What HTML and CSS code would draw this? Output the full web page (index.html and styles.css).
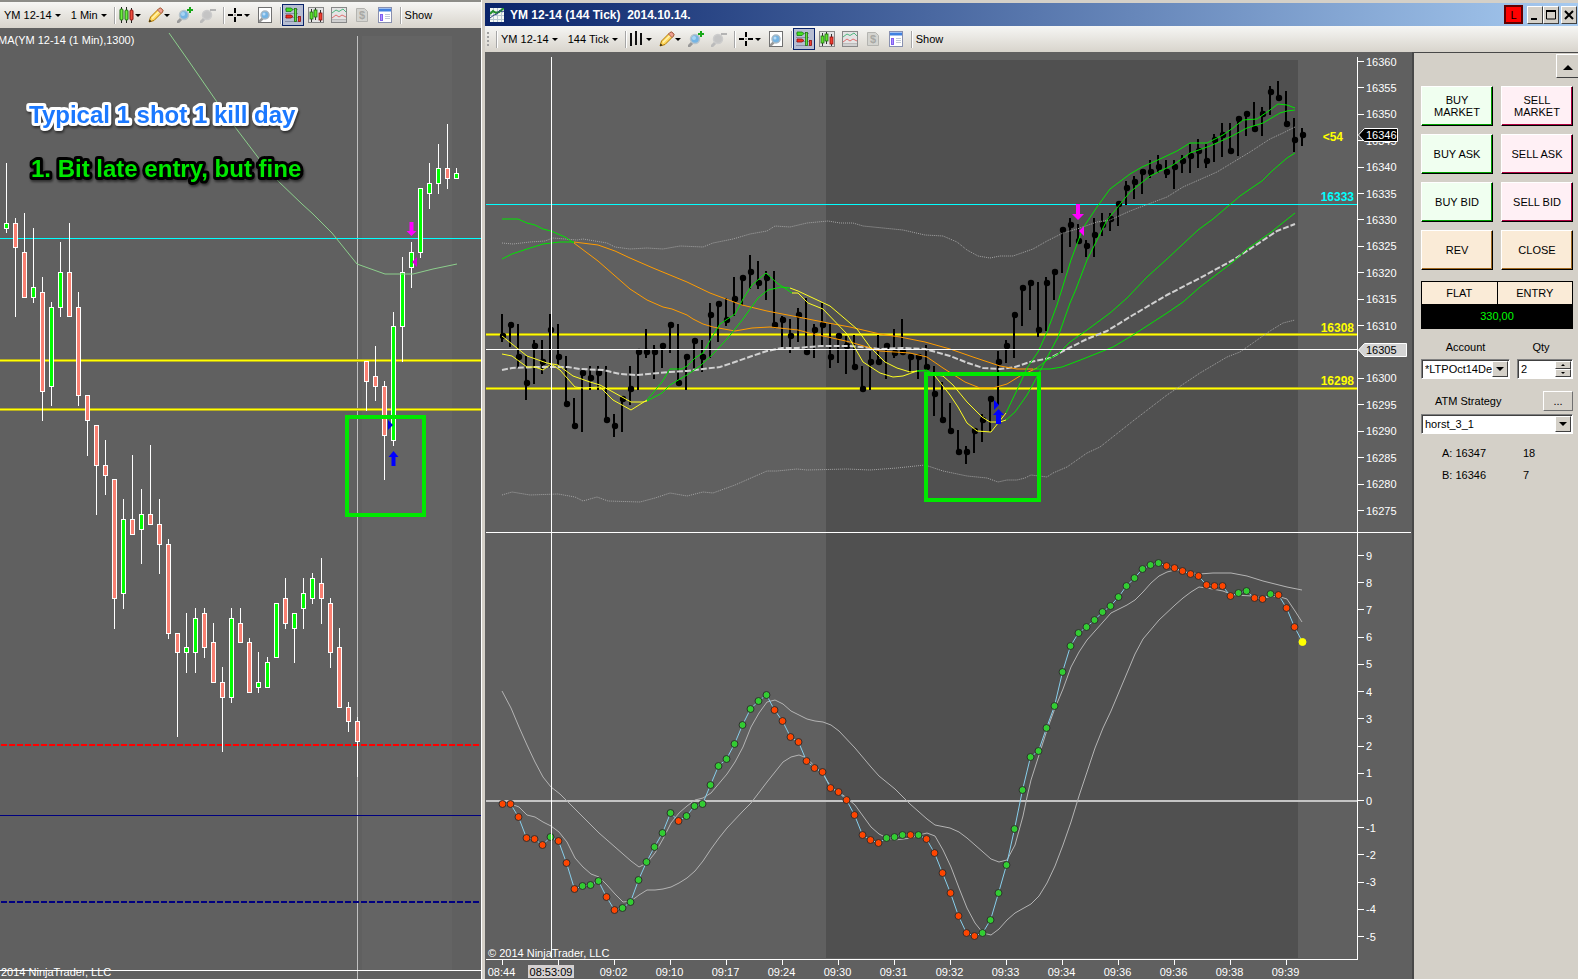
FILE: index.html
```html
<!DOCTYPE html>
<html lang="en">
<head>
  <meta charset="UTF-8" />
  <meta name="viewport" content="width=device-width, initial-scale=1.0"/>
  <title>YM 12-14 (144 Tick) 2014.10.14.</title>
  <link rel="stylesheet" href="styles.css">
</head>
<body>

  <!-- toolbar icons -->
  <svg class="sprite" aria-hidden="true">
    <symbol id="i-candles" viewBox="0 0 16 16">
      <path d="M2.5 0v16M7.5 0v16M12.5 1v15" stroke="#222"/>
      <rect x="1" y="2" width="3" height="11" rx="1" fill="#6cf03c" stroke="#1c6a10"/>
      <rect x="6" y="3" width="3" height="10" rx="1" fill="#6cf03c" stroke="#1c6a10"/>
      <rect x="11" y="3" width="3" height="10" rx="1" fill="#f05040" stroke="#8a1010"/>
    </symbol>
    <symbol id="i-bars" viewBox="0 0 16 16">
      <path d="M1 2v13M6 0v14M11 2v12" stroke="#111" stroke-width="2"/>
    </symbol>
    <symbol id="i-pencil" viewBox="0 0 16 16">
      <path d="M1 15l1.5-5L11 1.5q1.5-1 3 .5t.5 3L6 13.5z" fill="#ffd860" stroke="#b07800"/>
      <path d="M4 11.5L12.5 3" stroke="#fff3b0" stroke-width="1.5"/>
      <path d="M11 1.5q1.5-1 3 .5t.5 3l-1.500 1.5-3.500-3.5z" fill="#f0a090" stroke="#a86050"/>
      <path d="M1 15l.7-2.5 1.8 1.8z" fill="#222"/>
    </symbol>
    <symbol id="i-zoom-in" viewBox="0 0 16 16">
      <path d="M1 15l4-4" stroke="#999" stroke-width="3" stroke-linecap="round"/>
      <circle cx="7" cy="8" r="4.5" fill="#74b4e4" stroke="#b8c4cc" stroke-width="1.5"/>
      <circle cx="6" cy="7" r="2" fill="#a8d4f4"/>
      <path d="M13 0v6M10 3h6" stroke="#18a818" stroke-width="2"/>
    </symbol>
    <symbol id="i-zoom-out" viewBox="0 0 16 16">
      <path d="M1 15l4-4" stroke="#bbb" stroke-width="3" stroke-linecap="round"/>
      <circle cx="7" cy="8" r="4.5" fill="#c4c4c4" stroke="#ccc" stroke-width="1.5"/>
      <path d="M10 3h6" stroke="#b4b4b4" stroke-width="2"/>
    </symbol>
    <symbol id="i-cross" viewBox="0 0 16 16">
      <path d="M7 1v5M7 10v5M0 8h5M9 8h5" stroke="#000" stroke-width="2"/>
      <path d="M6.5 8h1" stroke="#000"/>
    </symbol>
    <symbol id="i-page" viewBox="0 0 16 16">
      <rect x="1.5" y=".5" width="13" height="15" fill="#fff" stroke="#707070"/>
      <path d="M3 14l3-3" stroke="#999" stroke-width="2.5" stroke-linecap="round"/>
      <circle cx="8" cy="8" r="4" fill="#74b4e4" stroke="#a8b8c4" stroke-width="1.5"/>
      <circle cx="7" cy="7" r="1.5" fill="#b8dcf8"/>
    </symbol>
    <symbol id="i-trader" viewBox="0 0 16 16">
      <path d="M0 2.5h13M0 6.5h13M0 10.5h13M0 14.5h13" stroke="#8890a8"/>
      <path d="M1 1h5l2 1.5L6 4.500H1z" fill="#40e020" stroke="#188010" stroke-width=".8"/>
      <path d="M1 8h5l2 1.5L6 11H1z" fill="#f03020" stroke="#901010" stroke-width=".8"/>
      <rect x="9.5" y="1.5" width="2" height="13" fill="#60e040" stroke="#207010" stroke-width=".8"/>
      <rect x="13.5" y="9.5" width="2" height="5" fill="#f04030" stroke="#901010" stroke-width=".8"/>
    </symbol>
    <symbol id="i-chart-candles" viewBox="0 0 16 16">
      <rect x=".5" y=".5" width="15" height="15" fill="#e4e4e4" stroke="#888"/>
      <path d="M3.5 2v13M7.5 1v12M12.5 3v12" stroke="#333"/>
      <rect x="2" y="5" width="3" height="7" fill="#60e030" stroke="#207010" stroke-width=".8"/>
      <rect x="6" y="3" width="3" height="7" fill="#60e030" stroke="#207010" stroke-width=".8"/>
      <rect x="11" y="6" width="3" height="7" fill="#f04030" stroke="#901010" stroke-width=".8"/>
    </symbol>
    <symbol id="i-lines" viewBox="0 0 16 16">
      <rect x=".5" y=".5" width="15" height="15" fill="#e4e4e4" stroke="#888"/>
      <path d="M1 12.5h14M1 14h14" stroke="#bbb"/>
      <path d="M1 6l4-3 3 1.5L12 2l3 3" fill="none" stroke="#50b880"/>
      <path d="M1 11l4-3 3 2 3-2 4 2" fill="none" stroke="#e07070"/>
    </symbol>
    <symbol id="i-dollar" viewBox="0 0 16 16">
      <path d="M2.5 1.5h8l3 3v10h-11z" fill="#d4d4d0" stroke="#b4b4b0"/>
      <text x="5" y="12" class="icon-dollar">$</text>
    </symbol>
    <symbol id="i-panel" viewBox="0 0 16 16">
      <rect x="1.5" y=".5" width="13" height="15" fill="#fff" stroke="#8890b0"/>
      <path d="M2 3h12" stroke="#4080e0" stroke-width="3"/>
      <rect x="3.5" y="7.5" width="2" height="6" fill="#b090ff" stroke="#8060f0"/>
      <path d="M8 7.5h5M8 9.5h5M8 11.5h5" stroke="#c0c8d8"/>
    </symbol>
    <symbol id="i-app" viewBox="0 0 14 14">
      <rect width="14" height="14" fill="#f4f8f4"/>
      <path d="M0 3.5h14M0 7.5h14M0 11.5h14M3.5 0v14M7.5 0v14M11.5 0v14" stroke="#b8c8d0"/>
      <path d="M0 6l3-3 3 2 3-1 5-4" fill="none" stroke="#20902c" stroke-width="2"/>
      <path d="M0 10l4-3 3-1 3-4 2 2 2-1" fill="none" stroke="#304880"/>
    </symbol>
  </svg>

  <section class="pane pane-minute">
    <div class="toolbar">
      <button class="tool symbol">YM 12-14<i class="caret"></i></button>
      <button class="tool">1 Min<i class="caret"></i></button>
      <span class="sep"></span>
      <button class="tool" aria-label="Chart style"><svg class="icon"><use href="#i-candles"/></svg><i class="caret near"></i></button>
      <button class="tool" aria-label="Draw"><svg class="icon"><use href="#i-pencil"/></svg><i class="caret near"></i></button>
      <button class="tool" aria-label="Zoom in"><svg class="icon"><use href="#i-zoom-in"/></svg></button>
      <button class="tool" aria-label="Zoom out"><svg class="icon"><use href="#i-zoom-out"/></svg></button>
      <span class="sep"></span>
      <button class="tool" aria-label="Cursor"><svg class="icon"><use href="#i-cross"/></svg><i class="caret near"></i></button>
      <button class="tool" aria-label="Data box"><svg class="icon"><use href="#i-page"/></svg></button>
      <span class="sep"></span>
      <button class="tool active" aria-label="Chart trader"><svg class="icon"><use href="#i-trader"/></svg></button>
      <button class="tool" aria-label="Data series"><svg class="icon"><use href="#i-chart-candles"/></svg></button>
      <button class="tool" aria-label="Indicators"><svg class="icon"><use href="#i-lines"/></svg></button>
      <button class="tool" aria-label="Strategies"><svg class="icon"><use href="#i-dollar"/></svg></button>
      <button class="tool" aria-label="Properties"><svg class="icon"><use href="#i-panel"/></svg></button>
      <span class="sep"></span>
      <button class="tool">Show</button>
    </div>
    <div class="chart">
      <svg id="minuteChart">
        <g transform="translate(0,-28)">
          <rect x="362" y="36" width="90" height="934" fill="#646464"/>
          <g class="crisp">
            <path d="M357.5 36v943" stroke="#c0c0c0"/>
            <path d="M0 238.5h481" stroke="#00ffff"/>
            <path d="M0 360.5h481M0 409.5h481" stroke="#b8b020" stroke-width="3"/>
            <path d="M0 360.5h481M0 409.5h481" stroke="#ffff00"/>
            <path d="M1 744.5h479" stroke="#ff0000" stroke-width="2" stroke-dasharray="6 2"/>
            <path d="M0 815.5h481" stroke="#000080"/>
            <path d="M1 901.5h479" stroke="#000080" stroke-width="2" stroke-dasharray="6 2"/>
            <path d="M0 970.5h481" stroke="#fff"/>
          </g>
          <g id="candles" class="crisp"></g>
          <polyline class="thin" stroke="#8ccf8c" points="169,33 188,60 217,102 235,127 260,160 278,181 302,204 313,214 332,233 357,264 385,274 413,274 433,269 457,264"/>
          <path d="M409.5 222h4v9h3l-5 5-5-5h3z" fill="#ff00ff"/>
          <path d="M417 257v10l-5-5z" fill="#d800d8"/>
          <path d="M391.5 466h4v-9h3l-5-6-5 6h3z" fill="#0000ff"/>
          <path d="M388 420v10l5-5z" fill="#0000e8"/>
          <rect class="mark" x="347" y="417" width="77" height="98"/>
          <text class="label" x="-2" y="44">MA(YM 12-14 (1 Min),1300)</text>
          <text class="label" x="1" y="976">2014 NinjaTrader, LLC</text>
          <text class="note note-title" x="29" y="123">Typical 1 shot 1 kill day</text>
          <text class="note note-entry" x="31" y="177">1. Bit late entry, but fine</text>
        </g>
      </svg>
    </div>
  </section>

  <section class="pane pane-tick">
    <header class="titlebar">
      <svg class="app-icon"><use href="#i-app"/></svg>
      <h1>YM 12-14 (144 Tick)&nbsp; 2014.10.14.</h1>
      <button class="link-btn">L</button>
      <button class="win-btn" aria-label="Minimize"><svg><path d="M3 12h6" stroke="#000" stroke-width="2"/></svg></button>
      <button class="win-btn" aria-label="Maximize"><svg><path d="M2.5 4v8h9V4" fill="none" stroke="#000"/><path d="M2 4h10" stroke="#000" stroke-width="2"/></svg></button>
      <button class="win-btn close" aria-label="Close"><svg><path d="M3 4l8 8M11 4l-8 8" stroke="#000" stroke-width="2"/></svg></button>
    </header>
    <div class="toolbar">
      <span class="grip"></span>
      <span class="sep"></span>
      <button class="tool symbol">YM 12-14<i class="caret"></i></button>
      <button class="tool">144 Tick<i class="caret"></i></button>
      <span class="sep"></span>
      <button class="tool" aria-label="Chart style"><svg class="icon"><use href="#i-bars"/></svg><i class="caret near"></i></button>
      <button class="tool" aria-label="Draw"><svg class="icon"><use href="#i-pencil"/></svg><i class="caret near"></i></button>
      <button class="tool" aria-label="Zoom in"><svg class="icon"><use href="#i-zoom-in"/></svg></button>
      <button class="tool" aria-label="Zoom out"><svg class="icon"><use href="#i-zoom-out"/></svg></button>
      <span class="sep"></span>
      <button class="tool" aria-label="Cursor"><svg class="icon"><use href="#i-cross"/></svg><i class="caret near"></i></button>
      <button class="tool" aria-label="Data box"><svg class="icon"><use href="#i-page"/></svg></button>
      <span class="sep"></span>
      <button class="tool active" aria-label="Chart trader"><svg class="icon"><use href="#i-trader"/></svg></button>
      <button class="tool" aria-label="Data series"><svg class="icon"><use href="#i-chart-candles"/></svg></button>
      <button class="tool" aria-label="Indicators"><svg class="icon"><use href="#i-lines"/></svg></button>
      <button class="tool" aria-label="Strategies"><svg class="icon"><use href="#i-dollar"/></svg></button>
      <button class="tool" aria-label="Properties"><svg class="icon"><use href="#i-panel"/></svg></button>
      <span class="sep"></span>
      <button class="tool">Show</button>
    </div>

    <div class="workspace">
      <div class="chart">
        <svg id="tickChart">
          <g transform="translate(-485,-52)">
            <rect x="826" y="60" width="472" height="898" fill="#505050"/>
            <g class="crisp">
              <path d="M486 204.5h871" stroke="#00ffff"/>
              <path d="M486 334.5h871M486 388.5h871" stroke="#b8b020" stroke-width="3"/>
              <path d="M486 334.5h871M486 388.5h871" stroke="#ffff00"/>
              <path d="M486 801h871" stroke="#c4c4c4" stroke-width="2"/>
            </g>
            <g id="bars"></g>
            <g id="lines"></g>
            <g id="oscillator"></g>
            <g class="crisp">
              <path d="M486 349.5h871M551.5 57v901" stroke="#fff"/>
              <path d="M486 532.5h925M1357.5 57v902M486 959.5h872" stroke="#fff"/>
            </g>
            <g id="axes"></g>
            <path d="M1076 204h4v10h4l-6 6-6-6h4z" fill="#ff00ff"/>
            <path d="M1084 226v10l-5-5z" fill="#ff00ff"/>
            <path d="M996 424h5v-9h3l-5.500-6-5.500 6h3z" fill="#0000ff"/>
            <path d="M994 400v10l5-5z" fill="#0000ff"/>
            <rect class="mark" x="926" y="374" width="113" height="126"/>
            <text class="level cyan" x="1354" y="201">16333</text>
            <text class="level yellow" x="1354" y="332">16308</text>
            <text class="level yellow" x="1354" y="385">16298</text>
            <text class="level yellow" x="1343" y="141">&lt;54</text>
            <path d="M1358.5 135l6-6.500h33v13h-33z" fill="#000" stroke="#fff"/>
            <text class="label" x="1366" y="139">16346</text>
            <path d="M1358.5 350l6-6.500h42v13h-42z" fill="#d4d4d4" stroke="#fff"/>
            <text class="label dark" x="1366" y="354">16305</text>
            <rect x="528" y="965" width="46" height="13" fill="#d4d0d0"/>
            <text class="label dark time" x="551" y="976">08:53:09</text>
            <text class="label" x="488" y="957">© 2014 NinjaTrader, LLC</text>
          </g>
        </svg>
      </div>

      <aside class="trader">
        <button class="collapse" aria-label="Collapse"><i class="arrow-up"></i></button>
        <div class="orders">
          <button class="order buy">BUY MARKET</button>
          <button class="order sell">SELL MARKET</button>
          <button class="order buy">BUY ASK</button>
          <button class="order sell">SELL ASK</button>
          <button class="order buy">BUY BID</button>
          <button class="order sell">SELL BID</button>
          <button class="order misc">REV</button>
          <button class="order misc">CLOSE</button>
        </div>
        <div class="position">
          <span>FLAT</span>
          <span>ENTRY</span>
          <strong>330,00</strong>
        </div>
        <div class="fields">
          <div class="field account">
            <label for="account">Account</label>
            <div class="drop">
              <select id="account"><option>*LTPOct14De</option></select>
              <span class="drop-btn"><i class="caret"></i></span>
            </div>
          </div>
          <div class="field qty">
            <label for="qty">Qty</label>
            <div class="drop">
              <input id="qty" type="text" value="2">
              <span class="spin"><button aria-label="Up"><i class="arrow-up tiny"></i></button><button aria-label="Down"><i class="caret tiny"></i></button></span>
            </div>
          </div>
        </div>
        <div class="atm-head">
          <label for="atm">ATM Strategy</label>
          <button class="more">...</button>
        </div>
        <div class="drop">
          <select id="atm"><option>horst_3_1</option></select>
          <span class="drop-btn"><i class="caret"></i></span>
        </div>
        <dl class="quotes">
          <dt>A: 16347</dt><dd>18</dd>
          <dt>B: 16346</dt><dd>7</dd>
        </dl>
      </aside>
    </div>
  </section>

  <script src="script.js"></script>
</body>
</html>
```
FILE: styles.css
```css
* {
  box-sizing: border-box;
}
body {
  margin: 0;
  height: 100vh;
  display: flex;
  background: #d4d0c8;
  font-family: "Liberation Sans", Arial, sans-serif;
  font-size: 11px;
  color: #000;
  overflow: hidden;
}
button, input, select {
  font: inherit;
  color: inherit;
  padding: 0;
  margin: 0;
}
.sprite {
  position: absolute;
  width: 0;
  height: 0;
}
.pane {
  display: flex;
  flex-direction: column;
  min-width: 0;
}
.pane-minute {
  flex: 0 0 481px;
  border-top: 2px solid #8c8c88;
}
.pane-tick {
  flex: 1;
  padding-top: 3px;
  border-left: 1px solid #fff;
  padding-left: 3px;
}

/* toolbar */
.toolbar {
  display: flex;
  flex: none;
  align-items: center;
  gap: 7px;
  height: 26px;
  padding-left: 4px;
  background: linear-gradient(#f6f6f4, #d8d4cc);
}
.pane-tick .toolbar {
  padding-left: 2px;
}
.tool {
  display: flex;
  align-items: center;
  gap: 3px;
  border: 0;
  background: none;
  line-height: 13px;
  white-space: nowrap;
}
.tool.symbol {
  margin-right: 3px;
}
.tool.active {
  margin: 0 -3px;
  padding: 2px;
  border: 1px solid #0a246a;
  background: #b6bdd2;
}
.icon {
  width: 16px;
  height: 16px;
  overflow: visible;
}
.icon-dollar {
  font: bold 11px "Liberation Sans", sans-serif;
  fill: #a8a8a4;
}
.sep {
  width: 1px;
  height: 17px;
  margin: 0 -3px 0 0;
  background: #a6a6a6;
  box-shadow: 1px 0 #fff;
}
.grip {
  width: 2px;
  height: 15px;
  background: repeating-linear-gradient(#a0a0a0 0 2px, transparent 2px 4px);
}
.caret {
  border: 3px solid transparent;
  border-top-color: #000;
  border-bottom: 0;
}
.caret.near {
  margin-left: -3px;
}

/* title bar */
.titlebar {
  display: flex;
  flex: none;
  align-items: center;
  height: 23px;
  padding: 0 1px 0 5px;
  background: linear-gradient(to right, #0a246a, #a6caf0);
}
.titlebar h1 {
  flex: 1;
  margin: 0 0 0 6px;
  font-size: 12px;
  color: #fff;
}
.app-icon {
  width: 14px;
  height: 14px;
}
.link-btn {
  width: 19px;
  height: 19px;
  margin-right: 4px;
  background: #f00;
  border: 2px solid #600000;
}
.win-btn {
  width: 16px;
  height: 18px;
  background: #d4d0c8;
  border: 1px solid;
  border-color: #fff #404040 #404040 #fff;
}
.win-btn.close {
  margin-left: 2px;
}
.win-btn svg {
  display: block;
  width: 14px;
  height: 16px;
}

/* charts */
.workspace {
  display: flex;
  flex: 1;
  min-height: 0;
}
.chart {
  flex: 1;
  min-width: 0;
  min-height: 0;
  background: #606060;
}
.chart svg {
  display: block;
  width: 100%;
  height: 100%;
}
.crisp {
  shape-rendering: crispEdges;
}
.thin {
  fill: none;
}
.mark {
  fill: none;
  stroke: #00e800;
  stroke-width: 4;
}
.label {
  font-size: 11px;
  fill: #fff;
}
.label.dark {
  fill: #000;
}
.label.time {
  text-anchor: middle;
}
.level {
  font-size: 12px;
  font-weight: bold;
  text-anchor: end;
}
.level.cyan {
  fill: #00ffff;
}
.level.yellow {
  fill: #ffff00;
}
.note {
  font-size: 24px;
  font-weight: bold;
  paint-order: stroke;
  stroke-width: 6px;
  stroke-linejoin: round;
  filter: drop-shadow(1px 2px 1px rgba(0,0,0,0.5));
}
.note-title {
  fill: #1a78ff;
  stroke: #fff;
}
.note-entry {
  fill: #00e800;
  stroke: #000;
}

/* chart trader */
.trader {
  flex: 0 0 166px;
  display: flex;
  flex-direction: column;
  min-width: 0;
  padding: 1px 5px 0 7px;
  border-left: 2px solid #484848;
  border-top: 1px solid #484848;
}
.collapse {
  align-self: flex-end;
  width: 24px;
  height: 24px;
  margin-right: -7px;
  background: #d4d0c8;
  border: 1px solid;
  border-color: #fff #404040 #404040 #fff;
}
.arrow-up {
  display: inline-block;
  vertical-align: middle;
  border: 5px solid transparent;
  border-bottom-color: #000;
  border-top: 0;
}
.orders {
  display: grid;
  grid-template-columns: 1fr 1fr;
  gap: 8px;
  margin-top: 8px;
}
.order {
  height: 40px;
  padding: 0 10px;
  line-height: 12px;
  border: 1px solid;
  border-color: #fff #000 #000 #fff;
  white-space: normal;
}
.order.buy {
  background: #f0fff0;
  box-shadow: inset -1px -1px #00a000;
}
.order.sell {
  padding: 0 8px;
  background: #fff0f5;
  box-shadow: inset -1px -1px #b00040;
}
.order.misc {
  background: #faebd7;
  box-shadow: inset -1px -1px #a06820;
}
.position {
  display: grid;
  grid-template-columns: 1fr 1fr;
  gap: 1px;
  margin-top: 11px;
  padding: 1px;
  background: #000;
  text-align: center;
}
.position span {
  line-height: 22px;
  background: #faebd7;
}
.position strong {
  grid-column: 1 / 3;
  line-height: 23px;
  font-weight: normal;
  color: #00ff00;
}
.fields {
  display: flex;
  gap: 7px;
  margin-top: 12px;
}
.field {
  display: flex;
  flex-direction: column;
  gap: 6px;
  min-width: 0;
  text-align: center;
}
.field label {
  line-height: 12px;
}
.account {
  flex: 1;
}
.qty {
  flex: 0 0 56px;
}
.qty label {
  padding-right: 8px;
}
.drop {
  display: flex;
  height: 20px;
  background: #fff;
  border: 1px solid;
  border-color: #808080 #fff #fff #808080;
  box-shadow: inset 1px 1px #404040;
  padding: 1px;
}
.drop select, .drop input {
  flex: 1;
  min-width: 0;
  padding-left: 2px;
  border: 0;
  background: none;
  appearance: none;
  font-size: 11px;
  outline: 0;
}
.drop-btn {
  display: flex;
  flex: none;
  width: 16px;
  align-items: center;
  justify-content: center;
  background: #d4d0c8;
  border: 1px solid;
  border-color: #fff #404040 #404040 #fff;
}
.drop-btn .caret {
  border-width: 4px 4px 0;
}
.spin {
  display: flex;
  flex-direction: column;
  width: 16px;
}
.spin button {
  display: flex;
  flex: 1;
  align-items: center;
  justify-content: center;
  background: #d4d0c8;
  border: 1px solid;
  border-color: #fff #404040 #404040 #fff;
}
.caret.tiny {
  border-width: 2px 2px 0;
}
.arrow-up.tiny {
  border-width: 0 2px 2px;
}
.atm-head {
  display: flex;
  align-items: center;
  justify-content: space-between;
  margin: 12px 0 3px;
  padding-left: 14px;
}
.more {
  width: 30px;
  height: 20px;
  background: #d4d0c8;
  border: 1px solid;
  border-color: #fff #707070 #707070 #fff;
}
.quotes {
  display: grid;
  grid-template-columns: 81px 1fr;
  row-gap: 10px;
  margin: 13px 0 0 21px;
  line-height: 12px;
}
.quotes dd {
  margin: 0;
}
```
FILE: script.js
```js
const NS = 'http://www.w3.org/2000/svg';

function add(parent, tag, attrs, text) {
  const el = document.createElementNS(NS, tag);
  for (const key in attrs) el.setAttribute(key, attrs[key]);
  if (text) el.textContent = text;
  parent.appendChild(el);
  return el;
}

// 1 minute candles: high, body top, body bottom, low, up/down
const candles = [
  [163,223,229,233,'u'],[218,223,248,317,'d'],[213,252,298,298,'d'],[228,287,298,303,'u'],
  [277,292,392,421,'d'],[302,307,387,406,'u'],[242,272,308,317,'u'],[223,272,317,317,'d'],
  [292,307,396,406,'d'],[395,395,421,456,'d'],[425,425,466,515,'d'],[440,465,476,495,'d'],
  [479,479,599,629,'d'],[499,519,594,609,'u'],[455,519,535,535,'d'],[489,514,530,564,'u'],
  [445,514,525,525,'d'],[499,524,545,574,'d'],[539,544,634,639,'d'],[633,633,653,737,'d'],
  [613,647,653,673,'u'],[608,618,653,673,'u'],[608,613,648,658,'d'],[623,642,683,683,'d'],
  [667,682,698,752,'d'],[608,618,698,703,'u'],[608,623,643,643,'d'],[638,642,693,693,'d'],
  [652,682,688,693,'u'],[657,662,688,688,'u'],[603,603,658,658,'u'],[578,598,624,629,'d'],
  [613,613,629,663,'u'],[578,593,609,629,'u'],[573,578,599,604,'u'],[558,583,599,624,'d'],
  [598,603,653,668,'d'],[628,647,708,708,'d'],[702,707,722,732,'d'],[717,721,742,777,'d'],
  [361,361,382,411,'d'],[346,376,387,401,'d'],[381,386,436,480,'d'],[312,326,441,446,'u'],
  [257,272,327,362,'u'],[242,252,268,288,'u'],[188,188,253,258,'u'],[163,183,194,209,'u'],
  [144,168,184,194,'u'],[124,168,179,189,'d'],[168,173,179,179,'u']
];

const candleLayer = document.getElementById('candles');
candles.forEach(([high, top, bottom, low, dir], i) => {
  const x = 6.5 + i * 9;
  add(candleLayer, 'path', { d: `M${x} ${high}V${low}`, stroke: '#fff' });
  add(candleLayer, 'rect', {
    x: x - 2, y: top + 0.5, width: 4, height: bottom - top - 1,
    fill: dir === 'u' ? '#00ff00' : '#fa8072', stroke: '#fff'
  });
});

// 144 tick bars: high, low, close
const bars = [
  [314,342,336],[322,347,325],[324,368,357],[356,400,383],[340,384,346],[340,374,362],
  [314,368,330],[324,365,357],[356,404,404],[398,427,426],[372,432,373],[366,390,378],
  [366,390,373],[366,420,420],[414,437,426],[397,432,399],[366,405,389],[350,390,352],
  [329,358,352],[345,379,352],[344,368,346],[323,353,325],[324,383,383],[355,390,357],
  [339,368,341],[340,372,357],[303,358,315],[302,342,304],[298,326,320],[277,316,299],
  [276,305,278],[255,289,272],[261,289,283],[271,300,278],[271,326,325],[316,348,320],
  [319,353,336],[308,342,315],[298,353,352],[324,358,330],[303,347,325],[324,368,357],
  [333,363,336],[336,374,346],[335,368,367],[366,390,389],[351,390,362],[335,363,362],
  [344,379,346],[329,358,353],[319,353,352],[354,374,357],[354,379,357],[345,368,367],
  [366,416,394],[382,420,420],[403,431,431],[430,452,452],[446,464,452],[429,453,431],
  [414,442,420],[397,432,399],[351,405,362],[340,363,346],[313,358,315],[286,326,288],
  [281,310,283],[282,337,330],[277,331,283],[270,300,272],[228,273,230],[218,247,225],
  [224,243,241],[240,257,246],[218,257,235],[213,236,225],[213,231,219],[202,226,204],
  [181,205,188],[176,199,182],[170,194,172],[160,178,172],[155,173,167],[160,178,172],
  [160,189,167],[155,173,161],[144,173,156],[139,168,151],[144,168,161],[134,162,140],
  [123,157,135],[123,152,151],[117,156,119],[112,136,114],[102,130,129],[107,136,114],
  [86,115,92],[81,100,98],[91,125,124],[118,152,140],[128,146,135]
];

const barLayer = document.getElementById('bars');
bars.forEach(([high, low, close], i) => {
  const x = 502 + i * 8;
  add(barLayer, 'path', { d: `M${x} ${high}V${low}`, stroke: '#000', 'stroke-width': 2 });
  add(barLayer, 'circle', { cx: x + 1, cy: close, r: 3.2, fill: '#000' });
});

// moving averages and bands: stroke, width, dash, points
const green = '#00e600', orange = '#ff9c00', yellow = '#ffff20', gray = '#a4a4a4', white = '#d0d0d0';
const lines = [
  [gray, 1, '1 1', '502,243 513,244 530,242 545,241 553,238 577,240 583,239 607,243 615,247 630,249 647,248 663,249 680,246 703,247 713,243 733,239 750,234 767,231 775,226 790,227 807,223 828,221 840,223 853,223 863,226 903,230 925,235 943,236 957,242 967,250 978,256 990,258 1000,256 1013,256 1033,249 1047,241 1063,233 1077,229 1097,222 1110,220 1130,211 1167,197 1183,187 1217,172 1250,152 1270,139 1283,133 1295,127'],
  [gray, 1, '1 1', '502,495 512,492 530,495 558,494 575,497 583,501 597,497 608,501 640,502 655,498 670,493 687,496 703,492 713,493 735,485 767,471 777,471 797,469 807,470 847,469 870,470 897,468 925,465 943,471 967,476 987,478 998,482 1007,480 1017,480 1025,478 1031,475 1047,477 1053,473 1067,467 1087,453 1100,447 1133,421 1167,395 1200,373 1227,357 1240,352 1270,331 1283,323 1295,320'],
  [white, 2, '6 2', '502,370 512,368 535,367 557,367 568,367 580,369 603,370 620,374 637,375 670,372 687,371 703,369 720,367 735,362 752,356 767,351 782,348 798,348 820,346 850,346 870,348 880,349 903,348 925,349 950,356 968,363 983,368 1000,369 1015,367 1030,362 1050,358 1067,349 1087,339 1107,331 1133,315 1167,295 1200,278 1233,260 1253,247 1277,231 1295,224'],
  // slow pair
  [green, 1, '', '502,219 518,219 527,223 535,225 543,229 551,231 565,237 574,243'],
  [orange, 1, '', '574,243 598,261 630,289 647,300 663,307 672,309 687,315 693,319 703,324 713,327 735,331 752,328 770,327 798,330 813,334 828,337 850,342 867,347 880,351 910,353 927,357 943,368 965,382 980,388 993,388 1007,384 1020,376 1037,368'],
  [green, 1, '', '1037,368 1047,360 1058,354 1070,342 1087,330 1110,313 1127,298 1147,277 1167,259 1198,230 1213,219 1240,196 1253,187 1262,181 1272,171 1287,158 1295,153'],
  [green, 1, '', '502,259 512,254 527,249 543,244 560,242 574,242'],
  [orange, 1, '', '574,242 598,245 615,251 630,258 653,268 687,282 710,293 742,305 767,311 798,317 828,323 850,327 880,334 900,337 925,342 950,349 973,357 1000,366 1017,369 1033,369'],
  [green, 1, '', '1033,369 1050,369 1062,367 1083,359 1113,347 1133,335 1167,313 1183,302 1200,287 1233,262 1247,249 1270,233 1295,213'],
  // fast pair
  [yellow, 1, '', '502,336 527,356 547,363 558,365 573,376 590,382 600,385 613,392 631,402 643,402 647,401'],
  [green, 1, '', '647,401 662,393 670,385 680,379 687,375 700,366 713,354 727,339 743,319 758,298 768,290 782,287 790,288'],
  [yellow, 1, '', '790,288 798,291 830,306 857,329 870,347 885,362 897,368 910,372 917,371'],
  [green, 1, '', '917,371 927,371 935,375'],
  [yellow, 1, '', '935,375 943,376 953,385 967,402 982,417 990,422 1000,422 1006,420'],
  [green, 1, '', '1006,420 1015,412 1027,395 1038,375 1050,352 1058,337 1070,303 1076,289 1087,260 1097,240 1107,220 1117,208 1130,192 1150,176 1173,165 1190,153 1210,146 1230,137 1247,128 1263,123 1280,113 1287,111 1295,110'],
  [yellow, 1, '', '502,354 512,356 527,367 535,367 543,370 551,364 560,370 575,387 583,388 600,387 613,400 631,410 647,400'],
  [green, 1, '', '647,400 662,382 670,369 682,369 687,366 695,358 703,353 712,337 720,324 735,314 743,299 752,285 766,273 777,283 792,293'],
  [yellow, 1, '', '792,293 798,293 808,303 823,309 847,334 863,362 880,373 893,377 903,376 917,371'],
  [green, 1, '', '917,371 927,370 935,376'],
  [yellow, 1, '', '935,376 950,395 958,407 967,423 977,431 991,432 1006,413'],
  [green, 1, '', '1006,413 1017,390 1027,368 1038,352 1047,332 1057,305 1062,289 1071,260 1083,228 1097,207 1110,189 1130,174 1142,167 1160,159 1177,151 1190,143 1207,143 1223,135 1233,128 1243,120 1257,119 1270,110 1278,104 1287,105 1295,108'],
  // oscillator bands
  ['#b4b4b4', 1, '', '502,691 511,708 519,727 527,745 535,762 543,777 551,787 560,794 567,801 583,817 599,833 615,847 631,861 639,867 647,863 655,853 663,839 671,823 679,813 687,806 695,800 703,798 711,793 727,774 735,762 743,747 751,727 759,713 767,702 775,700 783,704 791,711 807,719 815,721 823,722 831,725 839,731 855,748 871,767 879,776 895,789 910,804 927,819 935,825 950,828 959,832 967,838 975,845 983,852 991,859 999,862 1007,860 1015,845 1023,816 1027,797 1031,780 1039,755 1047,730 1055,708 1063,689 1071,667 1079,652 1087,640 1103,622 1111,613 1119,609 1127,605 1135,600 1143,592 1151,583 1159,576 1167,572 1175,570 1187,572 1199,574 1213,573 1231,573 1247,576 1263,581 1287,587 1302,590'],
  ['#b4b4b4', 1, '', '511,804 519,807 527,815 535,817 543,822 551,826 559,832 567,842 575,858 583,867 591,874 599,877 607,885 615,894 623,902 631,901 639,895 647,890 655,890 663,889 671,887 679,883 687,878 695,871 703,861 711,849 719,838 727,828 743,811 751,803 767,782 783,762 791,757 799,755 807,758 815,767 823,774 831,787 847,798 855,805 863,816 871,827 879,834 887,838 895,840 911,838 919,835 927,833 935,836 943,850 951,867 959,888 967,908 975,923 983,933 991,935 999,929 1007,920 1015,913 1031,904 1039,896 1047,883 1055,866 1063,845 1071,822 1079,796 1087,772 1095,748 1103,728 1111,711 1119,692 1135,654 1143,639 1159,620 1175,605 1183,598 1191,592 1199,587 1207,588 1223,591 1233,595 1253,596 1263,598 1277,596 1287,599 1295,611 1302,622']
];

const lineLayer = document.getElementById('lines');
lines.forEach(([stroke, width, dash, points]) => {
  add(lineLayer, 'polyline', {
    class: 'thin', points, stroke, 'stroke-width': width, 'stroke-dasharray': dash || 'none'
  });
});

// oscillator dots, one colour letter per bar
const osc = [
  804,804,817,838,839,845,837,841,863,889,886,885,881,897,910,908,902,880,862,847,
  833,813,821,816,806,804,785,766,759,744,725,709,701,695,710,721,737,742,761,768,
  772,788,792,800,815,835,840,843,838,837,835,835,835,839,853,873,893,916,933,936,
  933,920,893,865,829,790,757,751,728,706,672,646,633,627,620,612,606,597,586,578,
  569,565,563,566,568,571,574,576,585,586,586,596,593,591,598,599,594,595,608,627,642
];
const oscColors =
  'rrrrrrgrrrgggrrggggg' +
  'ggrgggggggggggrrrrrr' +
  'rrrrrrrrgggrgrrrrrrr' +
  'gggggggggggggggggggg' +
  'gggrrrrrrrrrggrrgrrry';
const palette = { r: '#ff4500', g: '#32cd32', y: '#ffff00' };

const oscLayer = document.getElementById('oscillator');
add(oscLayer, 'polyline', {
  class: 'thin', stroke: '#87ceeb', points: osc.map((y, i) => `${502.5 + i * 8},${y}`).join(' ')
});
osc.forEach((y, i) => {
  const c = oscColors[i];
  add(oscLayer, 'circle', {
    cx: 502.5 + i * 8, cy: y, r: 3.5, fill: palette[c], stroke: c === 'y' ? '#ffff00' : '#303030'
  });
});

// axes
const axes = document.getElementById('axes');
function tickY(y, text) {
  add(axes, 'path', { class: 'crisp', d: `M1358 ${Math.floor(y) + 0.5}h6`, stroke: '#fff' });
  add(axes, 'text', { class: 'label', x: 1366, y: Math.round(y) + 4 }, text);
}
for (let p = 16360; p >= 16275; p -= 5) {
  if (p !== 16305) tickY(61.5 + (16360 - p) * 5.283, String(p));
}
for (let v = 9; v >= -5; v--) {
  tickY(800.5 - v * 27.22, String(v));
}
const times = ['08:44', '', '09:02', '09:10', '09:17', '09:24', '09:30', '09:31', '09:32', '09:33', '09:34', '09:36', '09:36', '09:38', '09:39'];
times.forEach((t, i) => {
  const x = 502.5 + i * 56;
  add(axes, 'path', { class: 'crisp', d: `M${x} 959v6`, stroke: '#fff' });
  add(axes, 'text', { class: 'label time', x: x - 1, y: 976 }, t);
});
```
